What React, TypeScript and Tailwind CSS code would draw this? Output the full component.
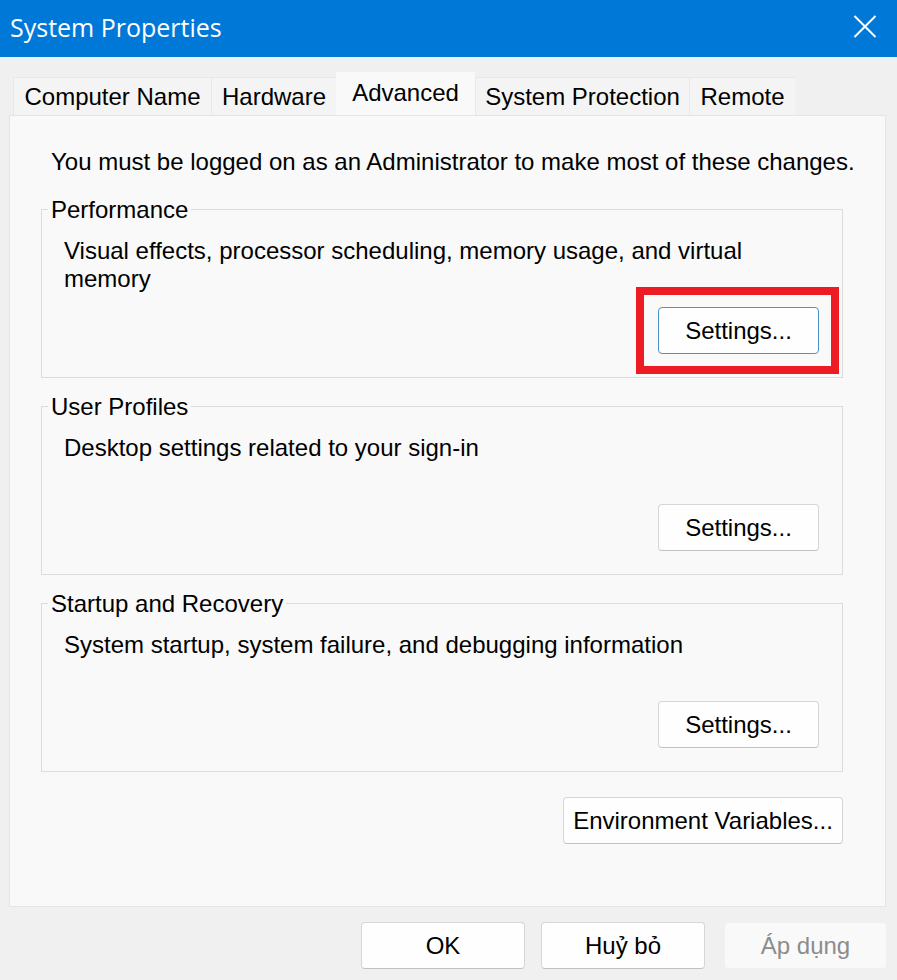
const tabs = [
  { label: 'Computer Name', className: 'w-[198px]' },
  { label: 'Hardware', className: 'w-[125px]' },
  { label: 'Advanced', className: 'w-[139px]' },
  { label: 'System Protection', className: 'w-[214px]' },
  { label: 'Remote', className: 'w-[106px]' },
];

const groups = [
  {
    title: 'Performance',
    text: 'Visual effects, processor scheduling, memory usage, and virtual memory',
    highlighted: true,
  },
  { title: 'User Profiles', text: 'Desktop settings related to your sign-in', highlighted: false },
  {
    title: 'Startup and Recovery',
    text: 'System startup, system failure, and debugging information',
    highlighted: false,
  },
];

const button = 'h-[47px] rounded border bg-[#fefefe] whitespace-nowrap';
const plainBorder = 'border-[#d6d6d6] border-b-[#c2c2c2]';

function Group({ title, text, highlighted }: { title: string; text: string; highlighted: boolean }) {
  return (
    <fieldset className="mb-[13px] flex h-[184px] flex-col border border-[#dcdcdc] pb-[23px]">
      <legend className="ml-1.5 px-[3px] pt-0.5">{title}</legend>
      <p className="pt-[13px] pr-16 pl-[22px]">{text}</p>
      <div className="relative mt-auto mr-[23px] self-end">
        <button
          type="button"
          className={`${button} w-[161px] ${highlighted ? 'border-[#4a93c9]' : plainBorder}`}
        >
          Settings...
        </button>
        {highlighted && (
          <span className="pointer-events-none absolute -top-5 -right-5 -bottom-5 -left-[22px] border-8 border-[#ed1c24]" />
        )}
      </div>
    </fieldset>
  );
}

export default function App() {
  return (
    <main className="flex min-h-screen flex-col bg-[#f0f0f0] font-['Liberation_Sans',Arial,sans-serif] text-[24px] leading-7 text-black">
      <header className="flex h-[57px] items-center justify-between bg-[#0078d7] pr-5 pb-1 pl-[10px] text-white">
        <h1 className="font-['Open_Sans','Noto_Sans',sans-serif] text-[25px]">System Properties</h1>
        <button type="button" aria-label="Close">
          <svg width="24" height="24" viewBox="0 0 24 24" fill="none" stroke="currentColor" strokeWidth="2">
            <path d="M1.5 1 22.5 22M22.5 1 1.5 22" />
          </svg>
        </button>
      </header>

      <div role="tablist" className="flex h-[58px] items-end pl-[13px]">
        {tabs.map(({ label, className }) => (
          <button
            key={label}
            type="button"
            role="tab"
            aria-selected={label === 'Advanced'}
            className={`${className} whitespace-nowrap ${
              label === 'Advanced'
                ? '-mb-px h-11 bg-[#f9f9f9] pb-0.5'
                : 'h-[38px] border-t border-l border-[#e8e8e8] bg-[#f4f4f4]'
            }`}
          >
            {label}
          </button>
        ))}
      </div>

      <section
        role="tabpanel"
        className="mr-[11px] ml-[9px] min-h-[792px] border border-[#e5e5e5] bg-[#f9f9f9] pt-8 pr-[42px] pl-[31px]"
      >
        <p className="mb-[18px] pl-[10px] whitespace-nowrap">
          You must be logged on as an Administrator to make most of these changes.
        </p>
        {groups.map((group) => (
          <Group key={group.title} {...group} />
        ))}
        <div className="flex justify-end pt-3">
          <button type="button" className={`${button} ${plainBorder} w-[280px]`}>
            Environment Variables...
          </button>
        </div>
      </section>

      <footer className="mt-[15px] flex justify-end gap-4 pr-[11px]">
        <button type="button" className={`${button} ${plainBorder} w-[164px]`}>
          OK
        </button>
        <button type="button" className={`${button} ${plainBorder} w-[164px]`}>
          Huỷ bỏ
        </button>
        <button
          type="button"
          disabled
          className="ml-1 h-[47px] w-[161px] rounded border-y border-[#f0f0f0] bg-[#f9f9f9] text-[#8c8c8c]"
        >
          Áp dụng
        </button>
      </footer>
    </main>
  );
}
